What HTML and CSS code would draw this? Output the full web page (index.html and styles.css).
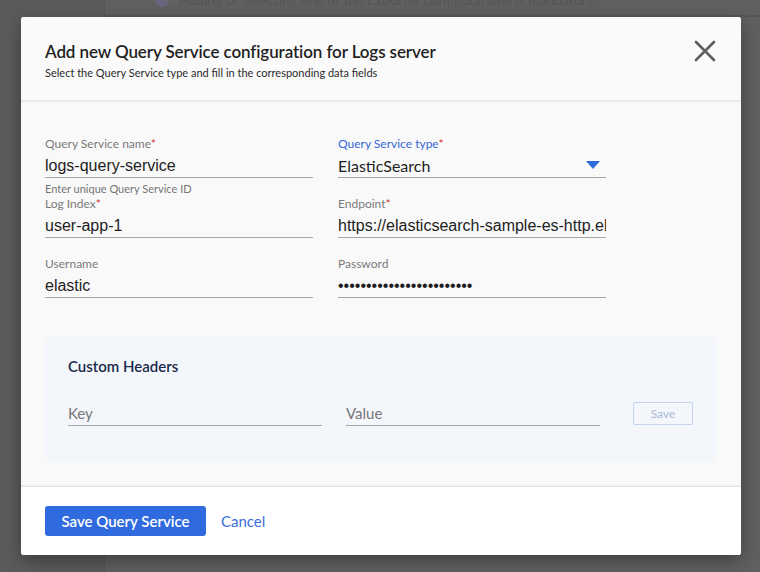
FILE: index.html
```html
<!DOCTYPE html>
<html>
<head>
<meta charset="utf-8">
<link rel="stylesheet" href="styles.css">
</head>
<body>
<div class="page">
  <aside class="sidebar"></aside>
  <main class="main">
    <div class="topbar">
      <span class="info-dot"></span>
      <span class="topbar-text">Adding or selecting one of the Exporter configurations is mandatory</span>
    </div>
  </main>
</div>

<div class="modal">
  <header class="modal-header">
    <div class="titles">
      <h1 class="title">Add new Query Service configuration for Logs server</h1>
      <p class="subtitle">Select the Query Service type and fill in the corresponding data fields</p>
    </div>
    <button class="close" aria-label="Close">
      <svg width="22" height="22" viewBox="0 0 22 22"><path d="M2 2 L20 20 M20 2 L2 20" stroke="#5f5f5f" stroke-width="2.6" stroke-linecap="round" fill="none"/></svg>
    </button>
  </header>

  <section class="modal-body">
    <div class="grid">
      <div class="field">
        <label class="label">Query Service name<span class="req">*</span></label>
        <input class="input" type="text" value="logs-query-service">
        <span class="helper">Enter unique Query Service ID</span>
      </div>
      <div class="field">
        <label class="label label-active">Query Service type<span class="req">*</span></label>
        <div class="select">
          <span class="select-value">ElasticSearch</span>
          <svg class="caret" width="14" height="9" viewBox="0 0 14 9"><path d="M0 0 H14 L7 8 Z" fill="#2f6ad9"/></svg>
        </div>
      </div>
      <div class="field">
        <label class="label">Log Index<span class="req">*</span></label>
        <input class="input" type="text" value="user-app-1">
      </div>
      <div class="field">
        <label class="label">Endpoint<span class="req">*</span></label>
        <input class="input" type="text" value="https://elasticsearch-sample-es-http.elastic.svc:9200">
      </div>
      <div class="field">
        <label class="label">Username</label>
        <input class="input" type="text" value="elastic">
      </div>
      <div class="field">
        <label class="label">Password</label>
        <input class="input password" type="password" value="elasticpassword123456789">
      </div>
    </div>

    <div class="headers-box">
      <h2 class="headers-title">Custom Headers</h2>
      <div class="headers-row">
        <input class="hinput" type="text" placeholder="Key">
        <input class="hinput" type="text" placeholder="Value">
        <button class="btn-small">Save</button>
      </div>
    </div>
  </section>

  <footer class="modal-footer">
    <button class="btn-primary">Save Query Service</button>
    <button class="btn-link">Cancel</button>
  </footer>
</div>
</body>
</html>
```

FILE: styles.css
```css
* { box-sizing: border-box; }
html, body { margin: 0; padding: 0; }
body {
  width: 760px;
  height: 572px;
  overflow: hidden;
  background: #606060;
  font-family: "Source Sans Pro", Lato, "Noto Sans", sans-serif;
  position: relative;
}

.page {
  display: flex;
  height: 572px;
}
.sidebar {
  width: 105px;
  background: #5b5b5b;
  border-right: 1px solid #565656;
}
.main {
  flex: 1;
  background: #606060;
}
.topbar {
  height: 33px;
  border-bottom: 2px solid #575757;
  display: flex;
  align-items: center;
  gap: 10px;
  padding-left: 50px;
  margin-top: -16px;
}
.info-dot {
  width: 14px;
  height: 14px;
  border-radius: 50%;
  background: #6b6680;
}
.topbar-text {
  color: #565656;
  font-size: 14px;
}

.modal {
  position: absolute;
  left: 21px;
  top: 17px;
  width: 720px;
  height: 538px;
  background: #fafafa;
  border-radius: 3px;
  box-shadow: 0 6px 18px rgba(0,0,0,0.35);
  display: flex;
  flex-direction: column;
  overflow: hidden;
}

.modal-header {
  height: 84px;
  display: flex;
  justify-content: space-between;
  align-items: flex-start;
  padding: 22px 24px 0 24px;
  background: #fafafa;
  border-bottom: 1px solid #e6e6e6;
  box-shadow: 0 1px 2px rgba(0,0,0,0.06);
  position: relative;
  z-index: 1;
}
.title {
  margin: 0;
  font-size: 17px;
  line-height: 26px;
  font-weight: 600;
  color: #1f1f1f;
  letter-spacing: -0.1px;
}
.subtitle {
  margin: 1px 0 0 0;
  font-size: 11px;
  line-height: 14px;
  color: #2a2a2a;
}
.close {
  border: 0;
  background: none;
  padding: 0;
  margin: 0;
  margin-top: 1px;
  margin-right: 1px;
  width: 22px;
  height: 22px;
  cursor: pointer;
}
.close svg { display: block; }

.modal-body {
  flex: 1;
  background: #f9f9f9;
  padding: 35px 24px 0 24px;
}
.grid {
  display: grid;
  grid-template-columns: 268px 268px;
  column-gap: 25px;
  row-gap: 0;
}
.field {
  display: flex;
  flex-direction: column;
  height: 60px;
  position: relative;
}
.label {
  font-size: 12px;
  line-height: 16px;
  color: #7a7a7a;
}
.label-active { color: #3567d6; }
.req { color: #d0342c; }
.input {
  border: 0;
  border-bottom: 1px solid #a8a8a8;
  background: transparent;
  font-family: "Liberation Sans", Arial, sans-serif;
  font-size: 16px;
  color: #1e1e1e;
  padding: 5px 0 2px 0;
  height: 26px;
  width: 100%;
  outline: none;
}
.password {
  font-size: 16px;
}
.helper {
  font-size: 11px;
  line-height: 12px;
  color: #757575;
  margin-top: 5px;
}
.select {
  display: flex;
  justify-content: space-between;
  align-items: center;
  border-bottom: 1px solid #a8a8a8;
  height: 26px;
  padding: 4px 6px 2px 0;
}
.select-value {
  font-size: 16px;
  color: #1e1e1e;
}

.headers-box {
  margin-top: 21px;
  background: #f3f6fa;
  border-radius: 6px;
  padding: 19px 23px 0 23px;
  height: 125px;
}
.headers-title {
  margin: 0;
  font-size: 15px;
  line-height: 20px;
  font-weight: 600;
  color: #1c2a4d;
}
.headers-row {
  display: flex;
  align-items: flex-end;
  margin-top: 26px;
}
.hinput {
  width: 254px;
  border: 0;
  border-bottom: 1px solid #a8a8a8;
  background: transparent;
  font-family: inherit;
  font-size: 15px;
  padding: 0 0 2px 0;
  height: 24px;
  outline: none;
  margin-right: 24px;
}
.hinput::placeholder { color: #777; }
.btn-small {
  margin-left: 9px;
  width: 60px;
  height: 23px;
  border: 1px solid #c3d4f3;
  border-radius: 2px;
  background: transparent;
  color: #aab9d8;
  font-family: inherit;
  font-size: 12px;
  margin-bottom: 1px;
}

.modal-footer {
  height: 69px;
  background: #fff;
  border-top: 1px solid #e2e2e2;
  box-shadow: 0 -1px 2px rgba(0,0,0,0.05);
  display: flex;
  align-items: flex-start;
  padding: 19px 24px 0 24px;
  gap: 15px;
}
.btn-primary {
  height: 30px;
  padding: 0 12px;
  width: 161px;
  background: #2f6adf;
  color: #fff;
  border: 0;
  border-radius: 3px;
  font-family: inherit;
  font-size: 15px;
  font-weight: 600;
}
.btn-link {
  border: 0;
  background: none;
  padding: 0;
  height: 30px;
  font-family: inherit;
  font-size: 15px;
  color: #3b6ed8;
}
```
